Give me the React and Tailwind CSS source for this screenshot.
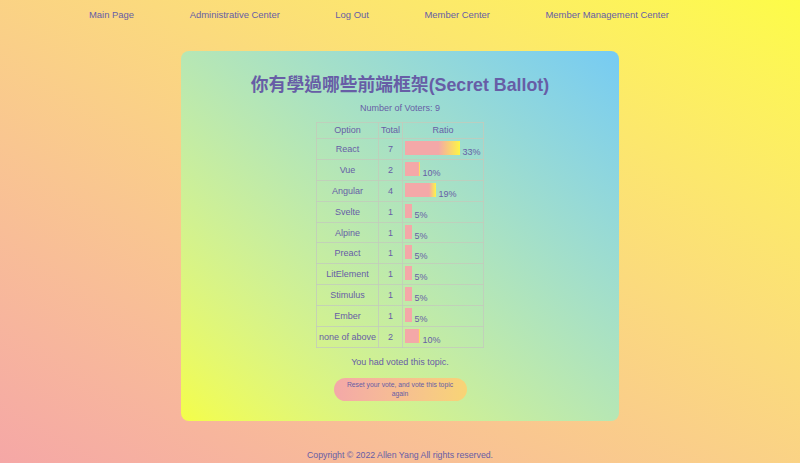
// App.jsx
const NAV = ["Main Page", "Administrative Center", "Log Out", "Member Center", "Member Management Center"];

const ROWS = [
  { name: "React", total: 7, pct: "33%", w: 55 },
  { name: "Vue", total: 2, pct: "10%", w: 15 },
  { name: "Angular", total: 4, pct: "19%", w: 31 },
  { name: "Svelte", total: 1, pct: "5%", w: 7 },
  { name: "Alpine", total: 1, pct: "5%", w: 7 },
  { name: "Preact", total: 1, pct: "5%", w: 7 },
  { name: "LitElement", total: 1, pct: "5%", w: 7 },
  { name: "Stimulus", total: 1, pct: "5%", w: 7 },
  { name: "Ember", total: 1, pct: "5%", w: 7 },
  { name: "none of above", total: 2, pct: "10%", w: 15 },
];

function Bar({ w }) {
  // yellow tail grows with bar length
  const stop = Math.max(0, 100 - w / 1.4);
  return (
    <div
      className="h-[14px] shrink-0"
      style={{
        width: `${w}px`,
        background: `linear-gradient(to right, #f4a8a8 ${stop}%, #fdf545 100%)`,
      }}
    />
  );
}

export default function App() {
  return (
    <div
      className="min-h-screen flex flex-col bg-linear-to-tr from-[#f5a7a6] to-[#fdfc47] text-[#675da6]"
      style={{ fontFamily: '"Liberation Sans", Arial, "Noto Sans CJK TC", sans-serif' }}
    >
      {/* Nav */}
      <nav className="h-[30px] flex items-center pl-[89px] gap-[55.5px] text-[9.45px] leading-[12px]">
        {NAV.map((n) => (
          <a key={n} className="whitespace-nowrap cursor-pointer">{n}</a>
        ))}
      </nav>

      {/* Card */}
      <main className="mt-[21px] mx-auto w-[438px] h-[370px] rounded-[8px] bg-linear-to-tr from-[#f4fd48] to-[#76cbf3] flex flex-col items-center pt-[23px]">
        <h1 className="text-[17.8px] leading-[22px] font-bold whitespace-nowrap">
          你有學過哪些前端框架(Secret Ballot)
        </h1>
        <div className="mt-[6px] text-[9px] leading-[12px]">Number of Voters: 9</div>

        <table className="mt-[8px] w-[167px] border-collapse border border-[#c3cbbb]/80 text-[9px] table-fixed">
          <colgroup>
            <col className="w-[62px]" />
            <col className="w-[24px]" />
            <col className="w-[81px]" />
          </colgroup>
          <thead>
            <tr className="h-[16px]">
              <th className="font-normal border border-[#c3cbbb]/80 leading-[11px]">Option</th>
              <th className="font-normal border border-[#c3cbbb]/80 leading-[11px]">Total</th>
              <th className="font-normal border border-[#c3cbbb]/80 leading-[11px]">Ratio</th>
            </tr>
          </thead>
          <tbody>
            {ROWS.map((r) => (
              <tr key={r.name} className="h-[20.9px]">
                <td className="text-center border border-[#c3cbbb]/80 whitespace-nowrap leading-[11px] pt-[1px]">{r.name}</td>
                <td className="text-center border border-[#c3cbbb]/80 leading-[11px] pt-[1px]">{r.total}</td>
                <td className="border border-[#c3cbbb]/80 pl-[2px] pt-[1px]">
                  <div className="flex items-baseline">
                    <Bar w={r.w} />
                    <span className="ml-[2.5px] leading-[11px]">{r.pct}</span>
                  </div>
                </td>
              </tr>
            ))}
          </tbody>
        </table>

        <div className="mt-[8px] text-[9px] leading-[12px]">You had voted this topic.</div>

        <button className="mt-[10px] w-[133px] h-[23px] rounded-full bg-linear-to-r from-[#f4a8a8] to-[#f8d475] px-[12px] text-[6.8px] leading-[9.5px] text-center text-[#675da6]">
          Reset your vote, and vote this topic again
        </button>
      </main>

      {/* Footer */}
      <footer className="mt-[28px] text-center text-[8.75px] leading-[12px]">
        Copyright © 2022 Allen Yang All rights reserved.
      </footer>
    </div>
  );
}
